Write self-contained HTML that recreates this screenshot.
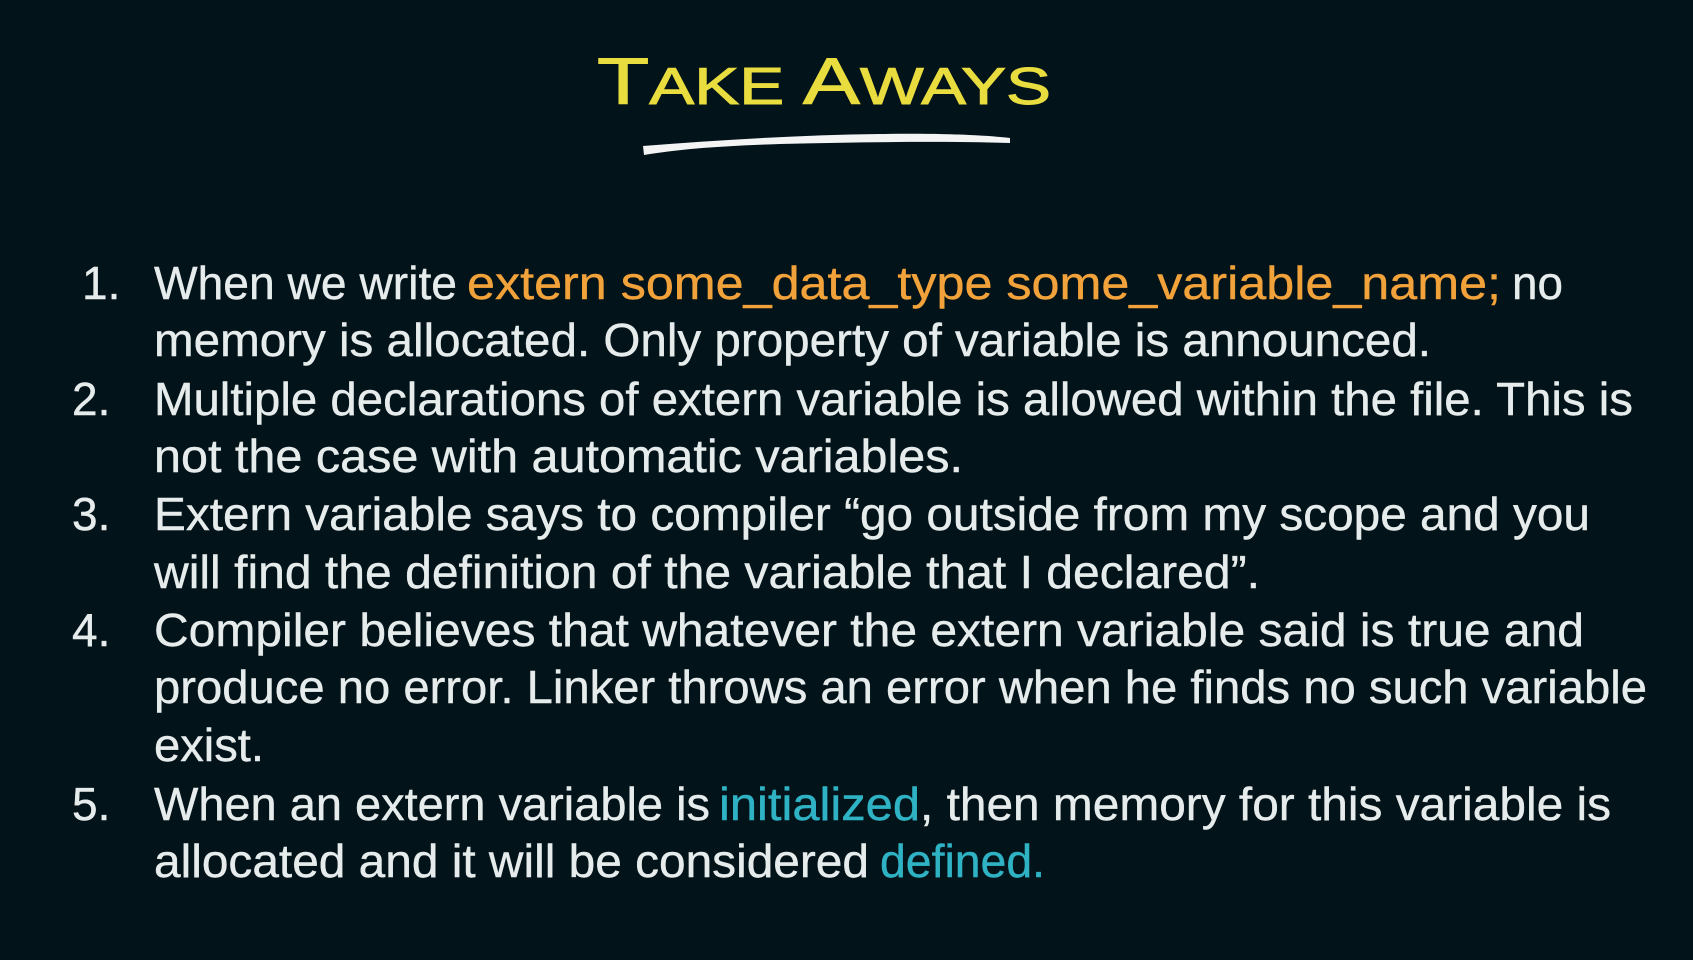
<!DOCTYPE html>
<html><head><meta charset="utf-8"><style>
html,body{margin:0;padding:0;background:#03131a;width:1693px;height:960px;overflow:hidden}
svg{display:block}
text{font-family:"Liberation Sans",sans-serif}
</style></head><body>
<svg width="1693" height="960" viewBox="0 0 1693 960">
<rect width="1693" height="960" fill="#03131a"/>
<text x="597" y="104" fill="#e9dc3e" stroke="#e9dc3e" stroke-width="1" textLength="454" lengthAdjust="spacingAndGlyphs"><tspan font-size="66">T</tspan><tspan font-size="52">AKE </tspan><tspan font-size="66">A</tspan><tspan font-size="52">WAYS</tspan></text>
<path d="M643 146 C720 140 800 135 880 134 C940 133 985 135 1010 138 L1010 143 C940 141 860 142 780 144 C720 146 680 149 644 155 Z" fill="#f4f4f4"/>
<path d="M650 151 L700 145 M760 141 L820 138 M900 137 L960 136" stroke="#f4f4f4" stroke-width="3"/>
<g font-size="46" fill="#e6ecec" stroke="#e6ecec" stroke-width="0.4">
<text x="82" y="299">1.</text>
<text x="154" y="299" textLength="303" lengthAdjust="spacingAndGlyphs">When we write</text>
<text x="467" y="299" fill="#f2a23a" stroke="#f2a23a" textLength="1034" lengthAdjust="spacingAndGlyphs">extern  some_data_type  some_variable_name;</text>
<text x="1512" y="299" textLength="51" lengthAdjust="spacingAndGlyphs">no</text>
<text x="154" y="356" textLength="1277" lengthAdjust="spacingAndGlyphs">memory is allocated. Only property of variable is announced.</text>
<text x="72" y="415">2.</text>
<text x="154" y="415" textLength="1479" lengthAdjust="spacingAndGlyphs">Multiple declarations of extern variable is allowed within the file. This is</text>
<text x="154" y="472" textLength="809" lengthAdjust="spacingAndGlyphs">not the case with automatic variables.</text>
<text x="72" y="530">3.</text>
<text x="154" y="530" textLength="1436" lengthAdjust="spacingAndGlyphs">Extern variable says to compiler “go outside from my scope and you</text>
<text x="154" y="588" textLength="1106" lengthAdjust="spacingAndGlyphs">will find the definition of the variable that I declared”.</text>
<text x="72" y="646">4.</text>
<text x="154" y="646" textLength="1430" lengthAdjust="spacingAndGlyphs">Compiler believes that whatever the extern variable said is true and</text>
<text x="154" y="703" textLength="1493" lengthAdjust="spacingAndGlyphs">produce no error. Linker throws an error when he finds no such variable</text>
<text x="154" y="761" textLength="110" lengthAdjust="spacingAndGlyphs">exist.</text>
<text x="72" y="820">5.</text>
<text x="154" y="820" textLength="556" lengthAdjust="spacingAndGlyphs">When an extern variable is</text>
<text x="719" y="820" fill="#2fb3c4" stroke="#2fb3c4" textLength="201" lengthAdjust="spacingAndGlyphs">initialized</text>
<text x="920" y="820" textLength="691" lengthAdjust="spacingAndGlyphs">, then memory for this variable is</text>
<text x="154" y="877" textLength="715" lengthAdjust="spacingAndGlyphs">allocated and it will be considered</text>
<text x="880" y="877" fill="#2fb3c4" stroke="#2fb3c4" textLength="165" lengthAdjust="spacingAndGlyphs">defined.</text>
</g>
</svg>
</body></html>
